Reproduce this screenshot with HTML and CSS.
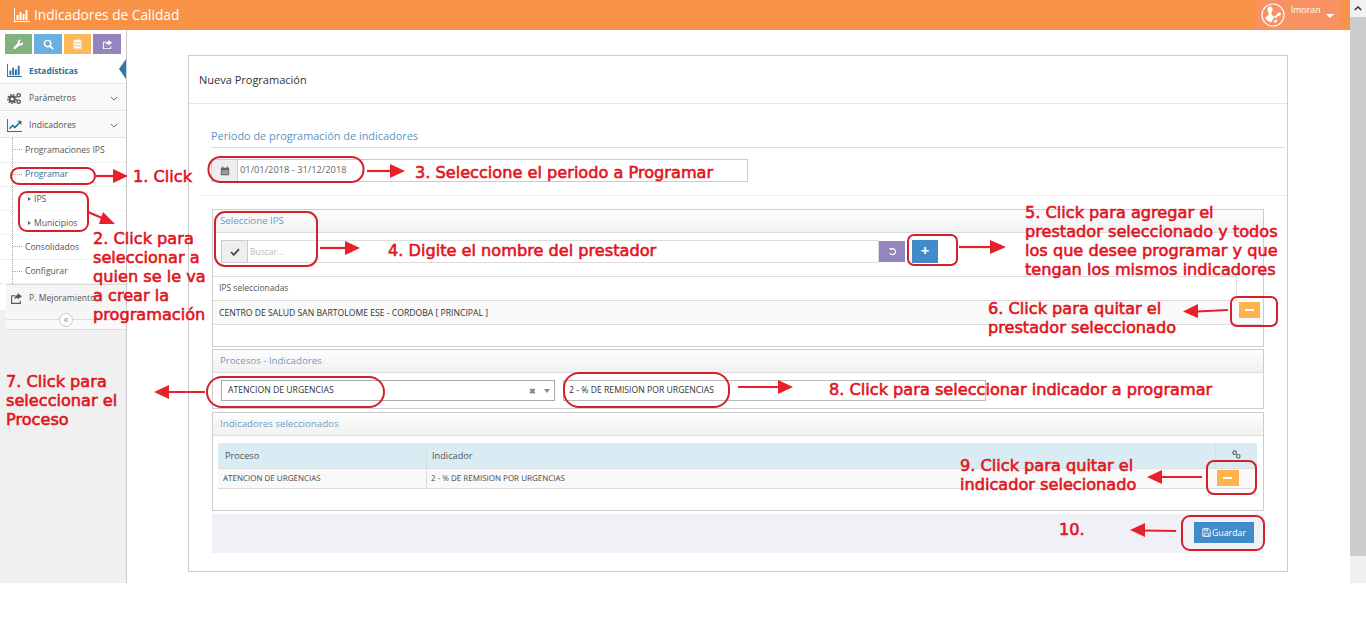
FILE: index.html
```html
<!DOCTYPE html>
<html lang="es">
<head>
    <meta charset="UTF-8">
    <link rel="stylesheet" href="styles.css">
    <title>Indicadores de Calidad</title>
</head>
<body>

<div class="app">
    <div class="main-col">
        <header class="navbar">
            <div class="brand">
                <svg class="brand-icon" viewBox="0 0 16 14"><path d="M0 0h1v13h15v1H0z M2.5 7h2v5h-2z M5.5 4h2v8h-2z M8.5 6h2v6h-2z M11.5 2h2v10h-2z" fill="#fff"/></svg>
                <span>Indicadores de Calidad</span>
            </div>
            <div class="user-box">
                <svg class="avatar" viewBox="0 0 24 24"><circle cx="12" cy="12" r="11" fill="none" stroke="#fff" stroke-width="1.1"/><path d="M8 3.5c2.500-.5 4 1 3.500 3.500-.3 1.500-1.500 2.500-1 4 .4 1.300 2 2 3 3l-3.500 5.500c-3-1-5.500-3-5.500-4.500 0-1.800 2.800-2 3.300-3.500.3-1-1.300-2.500-1.300-4.500 0-1.500.6-2.800 1.500-3.500z" fill="#fff"/><path d="M13 14l4.500-4.500 2.500.5-.5 2.500-2.500.5-2.500 2.500z M12.500 18l3-1.500 1 1.500-2.500 2z" fill="#fff"/></svg>
                <span class="user-name">lmoran</span>
                <span class="caret"></span>
            </div>
        </header>

        <div class="body-row">
            <aside class="sidebar">
                <div class="shortcuts">
                    <span class="sc sc-green"><svg viewBox="0 0 12 12"><path d="M11 3L9 5 7.5 4.500 7 3l2-2C7.500.5 5.500 1 5 3c-.2.7 0 1.200 0 1.500L1 9c-.6.600-.3 1.400 0 1.700.4.400 1.200.6 1.700 0L7 7c1.500.5 3.500 0 4-2 .1-.6.100-1.400 0-2z" fill="#fff"/></svg></span>
                    <span class="sc sc-blue"><svg viewBox="0 0 12 12"><circle cx="5" cy="5" r="3.5" fill="none" stroke="#fff" stroke-width="1.6"/><path d="M7.5 7.500L11 11" stroke="#fff" stroke-width="2"/></svg></span>
                    <span class="sc sc-yellow"><svg viewBox="0 0 12 12"><ellipse cx="6" cy="2.3" rx="4.5" ry="1.8" fill="#fff"/><path d="M1.500 3.800c1 1.500 8 1.500 9 0v1.800c-1 1.500-8 1.500-9 0z M1.500 6.800c1 1.500 8 1.500 9 0v1.800c-1 1.500-8 1.500-9 0z M1.500 9.600c1 1.200 8 1.200 9 0v.6c-1 1.600-8 1.600-9 0z" fill="#fff"/></svg></span>
                    <span class="sc sc-purple"><svg viewBox="0 0 12 12"><path d="M1 3h4v1H2v6h7V8h1v3H1z" fill="#fff"/><path d="M7 1l4 3-4 3V5.300C5.500 5.300 4.500 6 4 7.300 4 5 5 3.200 7 2.800z" fill="#fff"/></svg></span>
                </div>
                <nav class="menu">
                    <a class="menu-item menu-active">
                        <svg class="menu-icon" viewBox="0 0 16 14"><path d="M0 0h1v13h15v1H0z M2.5 7h2v5h-2z M5.5 4h2v8h-2z M8.5 6h2v6h-2z M11.5 2h2v10h-2z" fill="#2a6f97"/></svg>
                        <span>Estadísticas</span>
                    </a>
                    <a class="menu-item">
                        <svg class="menu-icon" viewBox="0 0 16 14"><circle cx="5.5" cy="7.5" r="2.8" fill="none" stroke="#555" stroke-width="2.2"/><circle cx="5.5" cy="7.5" r="4.7" fill="none" stroke="#555" stroke-width="1.4" stroke-dasharray="1.8 1.4"/><circle cx="12.5" cy="3.5" r="1.8" fill="none" stroke="#555" stroke-width="1.5"/><circle cx="12.5" cy="10.5" r="1.8" fill="none" stroke="#555" stroke-width="1.5"/></svg>
                        <span>Parámetros</span>
                        <svg class="chev" viewBox="0 0 10 6"><path d="M1 1l4 4 4-4" fill="none" stroke="#666" stroke-width="1.2"/></svg>
                    </a>
                    <a class="menu-item">
                        <svg class="menu-icon" viewBox="0 0 16 14"><path d="M0 0h1v13h15v1H0z" fill="#2a6f97"/><path d="M2.5 10.500L6 7l2.500 2L14 3.500" fill="none" stroke="#2a6f97" stroke-width="1.8"/><path d="M11 2h4.500v4.500z" fill="#2a6f97"/></svg>
                        <span>Indicadores</span>
                        <svg class="chev" viewBox="0 0 10 6"><path d="M1 1l4 4 4-4" fill="none" stroke="#666" stroke-width="1.2"/></svg>
                    </a>
                    <div class="submenu">
                        <a class="sub-item">Programaciones IPS</a>
                        <a class="sub-item sub-current">Programar</a>
                        <a class="sub-sub"><i class="tri"></i>IPS</a>
                        <a class="sub-sub"><i class="tri"></i>Municipios</a>
                        <a class="sub-item">Consolidados</a>
                        <a class="sub-item">Configurar</a>
                    </div>
                    <a class="menu-item menu-last">
                        <svg class="menu-icon" viewBox="0 0 12 12"><path d="M1 3h4v1H2v6h7V8h1v3H1z" fill="#555"/><path d="M7 1l4 3-4 3V5.300C5.500 5.300 4.500 6 4 7.300 4 5 5 3.200 7 2.800z" fill="#555"/></svg>
                        <span>P. Mejoramiento</span>
                    </a>
                </nav>
                <div class="collapse-row">
                    <span class="collapse-btn">«</span>
                </div>
            </aside>

            <main class="content">
                <section class="card">
                    <div class="card-title">Nueva Programación</div>
                    <div class="card-body">
                        <div class="section-title">Periodo de programación de indicadores</div>
                        <div class="date-row">
                            <span class="addon">
                                <svg viewBox="0 0 12 12" class="cal"><path d="M1 2h10v9H1z M2.5.5h1.500v2H2.500z M8 .5h1.500v2H8z" fill="#666"/><path d="M2 5h8v5H2z" fill="#999"/></svg>
                            </span>
                            <span class="date-value">01/01/2018 - 31/12/2018</span>
                        </div>
                        <hr class="sep">

                        <div class="panel panel-ips">
                            <div class="panel-head">Seleccione IPS</div>
                            <div class="search-row">
                                <span class="addon addon-check">
                                    <svg viewBox="0 0 12 10" class="check"><path d="M1 5l3.500 3.500L11 1.500" fill="none" stroke="#444" stroke-width="2.2"/></svg>
                                </span>
                                <span class="search-input">Buscar...</span>
                                <span class="btn-reset">
                                    <svg viewBox="0 0 12 12"><path d="M3 3.500A4 4 0 1 1 2.500 8" fill="none" stroke="#fff" stroke-width="1.5"/><path d="M1 1.500h3.500V5z" fill="#fff"/></svg>
                                </span>
                                <span class="btn-add">+</span>
                            </div>
                            <div class="ips-table">
                                <div class="ips-head">IPS seleccionadas</div>
                                <div class="ips-row">
                                    <span>CENTRO DE SALUD SAN BARTOLOME ESE - CORDOBA [ PRINCIPAL ]</span>
                                    <span class="btn-minus"></span>
                                </div>
                            </div>
                        </div>

                        <div class="panel panel-proc">
                            <div class="panel-head">Procesos - Indicadores</div>
                            <div class="select-row">
                                <div class="select-box">
                                    <span>ATENCION DE URGENCIAS</span>
                                    <span class="select-tools"><b>✖</b><i class="down"></i></span>
                                </div>
                                <div class="select-box select-ind">
                                    <span>2 - % DE REMISION POR URGENCIAS</span>
                                </div>
                            </div>
                        </div>

                        <div class="panel panel-sel">
                            <div class="panel-head">Indicadores seleccionados</div>
                            <div class="table-wrap">
                                <div class="t-row t-head">
                                    <div class="t-c1">Proceso</div>
                                    <div class="t-c2">Indicador</div>
                                    <div class="t-c3">
                                        <svg viewBox="0 0 10 10" class="link-ico"><circle cx="3" cy="3" r="2" fill="none" stroke="#666" stroke-width="1.3"/><circle cx="7" cy="7" r="2" fill="none" stroke="#666" stroke-width="1.3"/></svg>
                                    </div>
                                </div>
                                <div class="t-row t-data">
                                    <div class="t-c1">ATENCION DE URGENCIAS</div>
                                    <div class="t-c2">2 - % DE REMISION POR URGENCIAS</div>
                                    <div class="t-c3"><span class="btn-minus"></span></div>
                                </div>
                            </div>
                        </div>

                        <div class="form-foot">
                            <span class="btn-save">
                                <svg viewBox="0 0 12 12"><path d="M1 1h8l2 2v8H1z" fill="none" stroke="#fff" stroke-width="1.1"/><path d="M3.5 1h4v3h-4z M3 7h6v4H3z" fill="none" stroke="#fff" stroke-width="1"/></svg>
                                Guardar
                            </span>
                        </div>
                    </div>
                </section>
            </main>
        </div>
    </div>
    <div class="scrollbar">
        <span class="scroll-up"><svg viewBox="0 0 10 6"><path d="M1 5l4-4 4 4" fill="none" stroke="#333" stroke-width="1.8"/></svg></span>
        <span class="scroll-thumb"></span>
    </div>
</div>

<!-- red notes painted on top of the screenshot -->
<svg class="marks" width="1366" height="623" viewBox="0 0 1366 623">
    <g fill="none" stroke="#d3202c" stroke-width="2">
        <rect x="11" y="168" width="84" height="16" rx="8"/>
        <rect x="19" y="192" width="69" height="39" rx="8"/>
        <rect x="208.5" y="157" width="155" height="25" rx="12"/>
        <rect x="215" y="212" width="102" height="54" rx="10"/>
        <rect x="908" y="235" width="49" height="30" rx="6"/>
        <rect x="1231" y="297" width="46" height="29" rx="6"/>
        <rect x="207" y="377" width="177" height="30" rx="15"/>
        <rect x="564" y="373" width="165" height="34" rx="15"/>
        <rect x="1207" y="461" width="49" height="33" rx="7"/>
        <rect x="1182" y="516" width="82" height="34" rx="8"/>
    </g>
    <g fill="none" stroke="#e8202a" stroke-width="2.2">
        <path d="M96 176h18"/>
        <path d="M88 212l14 6"/>
        <path d="M367 171h24"/>
        <path d="M320 248h26"/>
        <path d="M959 247h32"/>
        <path d="M1228 310l-31 1.500"/>
        <path d="M205 392h-37"/>
        <path d="M738 387h41"/>
        <path d="M1202 477h-41"/>
        <path d="M1176 531l-32-.5"/>
    </g>
    <g fill="#e8202a">
        <path d="M113 169l15 7-15 7z"/>
        <path d="M103 212l12 12H99z"/>
        <path d="M390 164l15 7-15 7z"/>
        <path d="M345 241l15 7-15 7z"/>
        <path d="M990 240l16 7-16 7z"/>
        <path d="M1198 304v14l-15-6.500z"/>
        <path d="M169 385v14l-15-7z"/>
        <path d="M778 380l15 7-15 7z"/>
        <path d="M1162 470v14l-15-7z"/>
        <path d="M1145 523v14l-15-7z"/>
    </g>
</svg>
<div class="note n1">1. Click</div>
<div class="note n2">2. Click para<br>seleccionar a<br>quien se le va<br>a crear la<br>programación</div>
<div class="note n3">3. Seleccione el periodo a Programar</div>
<div class="note n4">4. Digite el nombre del prestador</div>
<div class="note n5">5. Click para agregar el<br>prestador seleccionado y todos<br>los que desee programar y que<br>tengan los mismos indicadores</div>
<div class="note n6">6. Click para quitar el<br>prestador seleccionado</div>
<div class="note n7">7. Click para<br>seleccionar el<br>Proceso</div>
<div class="note n8">8. Click para seleccionar indicador a programar</div>
<div class="note n9">9. Click para quitar el<br>indicador selecionado</div>
<div class="note n10">10.</div>

</body>
</html>
```
FILE: styles.css
```css
* {
    box-sizing: border-box;
}

html, body {
    margin: 0;
    height: 623px;
    overflow: hidden;
    background: #fff;
}

body {
    font-family: "Open Sans", sans-serif;
    font-size: 9px;
    color: #444;
    position: relative;
}

.app {
    display: flex;
    height: 583px;
}

.main-col {
    width: 1350px;
    display: flex;
    flex-direction: column;
}

/* top bar */
.navbar {
    height: 30px;
    background: #f79246;
    display: flex;
    justify-content: space-between;
    color: #fff;
    flex-shrink: 0;
}

.brand {
    display: flex;
    align-items: center;
    padding: 0 0 1px 14px;
    font-size: 13.7px;
    gap: 4px;
}

.brand-icon {
    width: 16px;
    height: 14px;
}

.user-box {
    width: 86px;
    margin-right: 8px;
    background: #f99262;
    display: flex;
    padding-left: 5px;
}

.avatar {
    width: 24px;
    height: 24px;
    margin-top: 3px;
}

.user-name {
    font-size: 8.8px;
    margin: 4px 0 0 6px;
}

.caret {
    width: 0;
    height: 0;
    border: 4px solid transparent;
    border-top-color: #fff;
    border-bottom: 0;
    margin: 14px 0 0 5px;
}

.body-row {
    flex: 1;
    display: flex;
    min-height: 0;
}

/* left menu */
.sidebar {
    width: 127px;
    background: #f0f0f0;
    border-right: 1px solid #c9c9c9;
    flex-shrink: 0;
}

.shortcuts {
    display: flex;
    gap: 2.2px;
    padding: 4px 0 3px 5px;
    background: #fff;
    height: 27px;
}

.sc {
    width: 27.3px;
    height: 20px;
    display: flex;
    align-items: center;
    justify-content: center;
}

.sc svg {
    width: 11px;
    height: 11px;
}

.sc-green { background: #82b27e; }
.sc-blue { background: #69b0e0; }
.sc-yellow { background: #fdb858; }
.sc-purple { background: #9585bf; }

.menu {
    background: #fff;
}

.menu-item {
    height: 27px;
    display: flex;
    align-items: center;
    padding: 1px 0 0 7px;
    border-bottom: 1px solid #e5e5e5;
    border-top: 1px solid #fff;
    font-size: 8.6px;
    color: #555;
    background: #f8f8f8;
    position: relative;
}

.menu-icon {
    width: 15px;
    height: 13px;
    margin-right: 7px;
    flex-shrink: 0;
}

.menu-active {
    background: #fff;
    color: #2a6f97;
    font-weight: 700;
    font-size: 8.3px;
    padding: 0 0 1px 7px;
}

.menu-active::after {
    content: "";
    position: absolute;
    right: 0;
    top: 1px;
    border: 10px solid transparent;
    border-left: 0;
    border-right: 7px solid #2f7aa8;
}

.chev {
    width: 8px;
    height: 5px;
    position: absolute;
    right: 8px;
    top: 11px;
}

.submenu {
    background: #fff;
    position: relative;
}

.submenu::before {
    content: "";
    position: absolute;
    left: 12px;
    top: 0;
    bottom: 0;
    border-left: 1px dotted #aaa;
}

.sub-item {
    height: 24.5px;
    display: flex;
    align-items: center;
    padding: 0 0 0 25px;
    font-size: 8.6px;
    border-bottom: 1px dotted #e2e2e2;
    color: #555;
    position: relative;
}

.sub-item::before {
    content: "";
    position: absolute;
    left: 13px;
    top: 11px;
    width: 9px;
    border-top: 1px dotted #aaa;
}

.sub-current {
    color: #2a6f97;
}

.sub-sub {
    height: 24px;
    display: flex;
    align-items: center;
    padding: 0 0 0 28px;
    font-size: 8.6px;
    color: #555;
    border-bottom: 1px dotted #eee;
}

.tri {
    width: 0;
    height: 0;
    border: 2.5px solid transparent;
    border-left: 3px solid #666;
    border-right: 0;
    margin-right: 3px;
}

.menu-last {
    height: 26px;
    margin-left: 6px;
    padding-left: 3px;
    background: #f5f5f5;
    border-top: 1px solid #ddd;
    border-bottom: 0;
}

.menu-last .menu-icon {
    margin-right: 5px;
}

.collapse-row {
    height: 20px;
    margin-left: 6px;
    background: linear-gradient(#f5f5f5, #fbfbfb);
    border-bottom: 1px solid #ddd;
    display: flex;
    justify-content: center;
    align-items: center;
    position: relative;
}

.collapse-row::before {
    content: "";
    position: absolute;
    left: 0;
    right: 0;
    top: 9px;
    border-top: 1px solid #ddd;
}

.collapse-btn {
    width: 14px;
    height: 14px;
    border: 1px solid #ccc;
    border-radius: 50%;
    background: #fff;
    color: #999;
    font-size: 10px;
    line-height: 10px;
    text-align: center;
    position: relative;
}

/* main card */
.content {
    flex: 1;
    padding: 25px 62px 11px 61px;
}

.card {
    height: 517px;
    border: 1px solid #ccc;
    background: #fff;
}

.card-title {
    height: 48px;
    border-bottom: 1px solid #e6e6e6;
    padding: 16px 0 0 10px;
    font-size: 11px;
    color: #333;
}

.card-body {
    padding: 0 0 0 23px;
}

.section-title {
    margin: 24px 0 0 -1px;
    height: 20px;
    padding-top: 1px;
    border-bottom: 1px solid #ddd;
    font-size: 10.9px;
    line-height: 14px;
    color: #5b94c2;
    width: 1074px;
}

.date-row {
    display: flex;
    width: 537px;
    height: 23px;
    margin: 11px 0 0 -1px;
    border: 1px solid #ccc;
}

.addon {
    width: 26px;
    background: #eee;
    border-right: 1px solid #ccc;
    display: flex;
    align-items: center;
    justify-content: center;
    flex-shrink: 0;
}

.cal {
    width: 10px;
    height: 10px;
}

.date-value {
    padding: 3px 0 0 2px;
    color: #666;
    font-size: 9.3px;
}

.sep {
    border: 0;
    border-top: 1px solid #eee;
    margin: 13px 0 13px -10px;
    width: 1085px;
}

.panel {
    width: 1052px;
    border: 1px solid #ccc;
}

.panel-head {
    height: 23px;
    background: linear-gradient(#fdfdfd, #f1f1f1);
    border-bottom: 1px solid #ddd;
    padding: 4px 0 0 7px;
    font-size: 9.7px;
    color: #6a9dc8;
}

.panel-ips {
    height: 138px;
}

.search-row {
    display: flex;
    align-items: flex-start;
    height: 43px;
    padding: 7px 0 0 8px;
}

.addon-check {
    width: 27px;
    height: 23px;
    border: 1px solid #ccc;
}

.check {
    width: 10px;
    height: 8px;
}

.search-input {
    width: 631px;
    height: 23px;
    border: 1px solid #ddd;
    border-left: 0;
    padding: 5px 0 0 2px;
    color: #bbb;
    font-size: 8.5px;
}

.btn-reset {
    width: 26px;
    height: 21px;
    margin-top: 1px;
    background: #9585bf;
    display: flex;
    align-items: center;
    justify-content: center;
}

.btn-reset svg {
    width: 9px;
    height: 9px;
}

.btn-add {
    width: 26px;
    height: 23px;
    margin-left: 7px;
    background: #428bca;
    color: #fff;
    font-weight: 700;
    font-size: 15px;
    line-height: 21px;
    text-align: center;
}

.ips-table {
    width: 1024px;
    border-top: 1px solid #e0e0e0;
}

.ips-head {
    height: 24px;
    padding: 5px 0 0 6px;
    border-bottom: 1px solid #ddd;
    border-right: 1px solid #e0e0e0;
    color: #555;
    font-size: 8.5px;
}

.ips-row {
    height: 24px;
    width: 1050px;
    background: #f9f9f9;
    border-bottom: 1px solid #ddd;
    display: flex;
    justify-content: space-between;
    padding: 6px 0 0 6px;
    font-size: 8.65px;
    color: #333;
}

.ips-row .btn-minus {
    margin: -5px 3px 0 0;
}

.btn-minus {
    display: block;
    width: 21px;
    height: 16px;
    background: #fdb44f;
    position: relative;
}

.btn-minus::after {
    content: "";
    position: absolute;
    left: 6px;
    top: 7px;
    width: 9px;
    height: 2px;
    background: #fff;
}

.panel-proc {
    height: 60px;
    margin-top: 2px;
}

.select-row {
    display: flex;
    padding: 7px 0 0 8px;
    gap: 8px;
}

.select-box {
    width: 334px;
    height: 21px;
    border: 1px solid #aaa;
    padding: 3px 0 0 6px;
    font-size: 8.67px;
    color: #333;
    display: flex;
    justify-content: space-between;
}

.select-ind {
    width: 423px;
    border-color: #bbb;
    padding-left: 5px;
}

.select-tools {
    display: flex;
    align-items: center;
    gap: 8px;
    padding: 0 4px 3px 0;
    color: #888;
}

.select-tools b {
    font-size: 8px;
}

.down {
    width: 0;
    height: 0;
    border: 3.5px solid transparent;
    border-top: 4px solid #888;
    border-bottom: 0;
}

.panel-sel {
    height: 99px;
    margin-top: 3px;
}

.table-wrap {
    margin: 7px 0 0 5px;
    width: 1039px;
}

.t-row {
    display: flex;
}

.t-c1 {
    width: 209px;
    border-right: 1px solid #ddd;
}

.t-c2 {
    flex: 1;
    border-right: 1px solid #ddd;
}

.t-c3 {
    width: 41px;
    text-align: center;
    position: relative;
}

.t-head {
    height: 26px;
    background: #d9ecf4;
    border-bottom: 1px solid #ddd;
    color: #555;
    font-size: 9.2px;
}

.t-head .t-c1 {
    padding: 6px 0 0 7px;
}

.t-head .t-c2 {
    padding: 6px 0 0 5px;
}

.link-ico {
    width: 9px;
    height: 9px;
    position: absolute;
    left: 16px;
    top: 7px;
}

.t-data {
    height: 20px;
    background: #f9f9f9;
    border-bottom: 1px solid #ddd;
    color: #444;
    font-size: 8px;
    text-rendering: geometricPrecision;
}

.t-data .t-c1 {
    padding: 4px 0 0 5px;
}

.t-data .t-c2 {
    padding: 4px 0 0 4px;
    border-right-color: transparent;
}

.t-data .btn-minus {
    margin: 1px 0 0 1px;
    width: 22px;
    height: 16px;
}

.form-foot {
    width: 1052px;
    height: 39px;
    margin-top: 3px;
    background: #eff1f6;
    display: flex;
    justify-content: flex-end;
    padding: 8px 10px 0 0;
}

.btn-save {
    width: 60px;
    height: 21px;
    background: #428bca;
    color: #fff;
    font-size: 8.8px;
    display: flex;
    align-items: center;
    justify-content: center;
    gap: 1px;
}

.btn-save svg {
    width: 9px;
    height: 9px;
}

/* scrollbar */
.scrollbar {
    width: 16px;
    background: #f0f0f0;
    display: flex;
    flex-direction: column;
}

.scroll-up {
    display: flex;
    height: 17px;
    background: #f1f1f1;
    align-items: center;
    justify-content: center;
}

.scroll-up svg {
    width: 8px;
    height: 5px;
}

.scroll-thumb {
    height: 539px;
    background: #cdcdcd;
}

/* notes */
.marks {
    position: absolute;
    left: 0;
    top: 0;
    pointer-events: none;
}

.note {
    position: absolute;
    font-family: "DejaVu Sans", sans-serif;
    font-size: 16.15px;
    line-height: 19px;
    -webkit-text-stroke: 0.6px #e1151d;
    color: #e1151d;
    white-space: nowrap;
}

.n1 { left: 133px; top: 167px; }
.n2 { left: 93px; top: 229px; }
.n3 { left: 415px; top: 163px; }
.n4 { left: 388px; top: 241px; }
.n5 { left: 1025px; top: 203px; }
.n6 { left: 988px; top: 299px; }
.n7 { left: 6px; top: 372px; }
.n8 { left: 829px; top: 380px; }
.n9 { left: 960px; top: 456px; }
.n10 { left: 1059px; top: 520px; }
```
